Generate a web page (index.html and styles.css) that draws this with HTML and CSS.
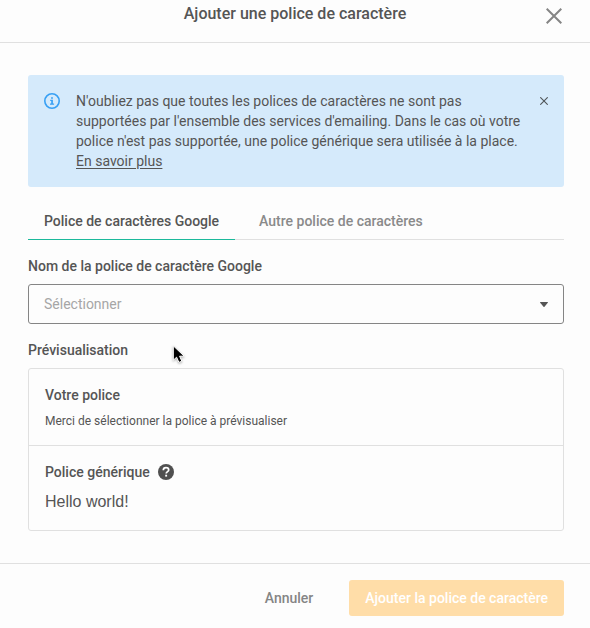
FILE: index.html
```html
<!DOCTYPE html>
<html lang="fr">
<head>
	<meta charset="UTF-8">
	<meta name="viewport" content="width=device-width, initial-scale=1">
	<title>Ajouter une police de caractère</title>
	<link rel="stylesheet" href="styles.css">
</head>
<body>
	<div class="modal" role="dialog" aria-labelledby="modal-title">
		<header class="modal-header">
			<h1 id="modal-title">Ajouter une police de caractère</h1>
			<button type="button" class="icon-btn modal-close" aria-label="Fermer">
				<svg width="16" height="16" viewBox="0 0 16 16"><path d="M.7.7l14.6 14.6M15.3.7L.7 15.3" stroke="#858585" stroke-width="2" fill="none"/></svg>
			</button>
		</header>

		<main class="modal-body">
			<div class="alert">
				<svg class="alert-icon" width="16" height="16" viewBox="0 0 16 16">
					<circle cx="8" cy="8" r="7.2" fill="none" stroke="#38a0f4" stroke-width="1.6"/>
					<path d="M7.1 4.2h1.8v1.6H7.1zM6.2 6.8h2.7v3.8h1.2v1.2H6v-1.2h1.2V8h-1z" fill="#38a0f4"/>
				</svg>
				<p class="alert-text">
					N'oubliez pas que toutes les polices de caractères ne sont pas supportées par l'ensemble des services d'emailing. Dans le cas où votre police n'est pas supportée, une police générique sera utilisée à la place. <a href="#">En savoir plus</a>
				</p>
				<button type="button" class="icon-btn alert-close" aria-label="Masquer">
					<svg width="8" height="8" viewBox="0 0 8 8"><path d="M.3.3l7.4 7.4M7.7.3L.3 7.7" stroke="#505558" stroke-width="1.1" fill="none"/></svg>
				</button>
			</div>

			<div class="tabs" role="tablist">
				<button type="button" class="tab active" role="tab" aria-selected="true">Police de caractères Google</button>
				<button type="button" class="tab" role="tab" aria-selected="false">Autre police de caractères</button>
			</div>

			<label class="label" for="font">Nom de la police de caractère Google</label>
			<div class="select">
				<select id="font">
					<option>Sélectionner</option>
				</select>
				<svg class="select-arrow" width="8" height="5" viewBox="0 0 8 5"><path d="M.4 0h7.2q.6.3.2.8L4.5 4.7q-.5.5-1 0L.2.8Q-.2.3.4 0z" fill="#555"/></svg>
			</div>

			<h2 class="label">Prévisualisation</h2>
			<div class="preview">
				<section class="preview-item">
					<h3>Votre police</h3>
					<p class="hint">Merci de sélectionner la police à prévisualiser</p>
				</section>
				<section class="preview-item">
					<h3>
						Police générique
						<svg width="16" height="16" viewBox="0 0 16 16">
							<circle cx="8" cy="8" r="8" fill="#505050"/>
							<path d="M5.3 6.2C5.3 4.6 6.4 3.6 8 3.6s2.7.9 2.7 2.3c0 1.6-2.5 1.8-2.5 3.6" fill="none" stroke="#fff" stroke-width="1.7"/>
							<path d="M7.2 10.7h1.9v1.9H7.2z" fill="#fff"/>
						</svg>
					</h3>
					<p class="sample">Hello world!</p>
				</section>
			</div>
		</main>

		<footer class="modal-footer">
			<button type="button" class="btn btn-cancel">Annuler</button>
			<button type="button" class="btn btn-primary" disabled>Ajouter la police de caractère</button>
		</footer>
	</div>

	<svg class="cursor" width="14" height="20" viewBox="0 0 14 20" aria-hidden="true">
		<path d="M1.3.8v14.4l3.3-3 2.3 5.2 2.9-1.2-2.2-5h4.6z" fill="#000" stroke="#fff" stroke-width="1"/>
	</svg>
</body>
</html>
```

FILE: styles.css
```css
* {
	box-sizing: border-box;
}
body {
	margin: 0;
	background: #fdfdfd;
	color: #555;
	font-family: Roboto, "Liberation Sans", sans-serif;
	font-size: 14px;
	line-height: 20px;
}
h1, h2, h3, p {
	margin: 0;
}
button, select {
	font: inherit;
	color: inherit;
}
button {
	padding: 0;
	border: 0;
	background: none;
	cursor: pointer;
}
svg {
	display: block;
}

.modal-header {
	display: grid;
	grid-template-columns: 1fr auto 1fr;
	padding: 2px 28px 16px;
	border-bottom: 1px solid #e0e0e0;
}
.modal-header h1 {
	grid-column: 2;
	font-size: 16px;
	font-weight: 500;
	line-height: 24px;
}
.modal-close {
	justify-self: end;
	align-self: end;
	padding-bottom: 2px;
}

.modal-body {
	padding: 32px 26px 32px 28px;
}

.alert {
	display: flex;
	align-items: flex-start;
	gap: 16px;
	padding: 16px;
	border-radius: 3px;
	background: #d5eafb;
}
.alert-icon {
	flex: none;
	margin-top: 2px;
}
.alert-text {
	flex: 1;
}
.alert-text a {
	color: inherit;
	text-decoration: underline;
	text-underline-offset: 2px;
}
.alert-close {
	padding: 6px 0;
}

.tabs {
	display: flex;
	gap: 8px;
	margin: 14px 0 16px;
	border-bottom: 1px solid #e0e0e0;
}
.tab {
	margin-bottom: -1px;
	padding: 10px 16px 8px;
	border-bottom: 1px solid transparent;
	color: #8a8a8a;
	font-weight: 500;
}
.tab.active {
	border-color: #1cb99b;
	color: #555;
}

.label {
	display: block;
	margin-bottom: 8px;
	font-size: 14px;
	font-weight: 500;
}

.select {
	position: relative;
	margin-bottom: 16px;
}
.select select {
	display: block;
	width: 100%;
	height: 40px;
	padding: 0 40px 0 15px;
	border: 1px solid #858585;
	border-radius: 3px;
	background: transparent;
	color: #a6a6a6;
	appearance: none;
}
.select-arrow {
	position: absolute;
	top: 18px;
	right: 16px;
	pointer-events: none;
}

.preview {
	border: 1px solid #e0e0e0;
	border-radius: 3px;
}
.preview-item {
	padding: 16px;
}
.preview-item + .preview-item {
	border-top: 1px solid #e0e0e0;
}
.preview-item:first-child {
	padding-bottom: 14px;
}
.preview-item h3 {
	display: flex;
	align-items: center;
	gap: 8px;
	font-size: 14px;
	font-weight: 500;
}
.hint {
	margin-top: 6px;
	font-size: 12px;
}
.sample {
	margin-top: 8px;
	font-family: "Liberation Sans", Arial, sans-serif;
	font-size: 16px;
	line-height: 24px;
}

.modal-footer {
	display: flex;
	justify-content: flex-end;
	gap: 20px;
	padding: 16px 26px 12px;
	border-top: 1px solid #e0e0e0;
}
.btn {
	height: 36px;
	padding: 0 16px;
	border-radius: 3px;
	font-weight: 500;
}
.btn-cancel {
	color: #858585;
}
.btn-primary {
	background: #ffdda8;
	color: #fff;
}

.cursor {
	position: absolute;
	top: 345px;
	left: 172px;
	pointer-events: none;
	filter: drop-shadow(0 1px 1px rgba(0, 0, 0, .3));
}
```
